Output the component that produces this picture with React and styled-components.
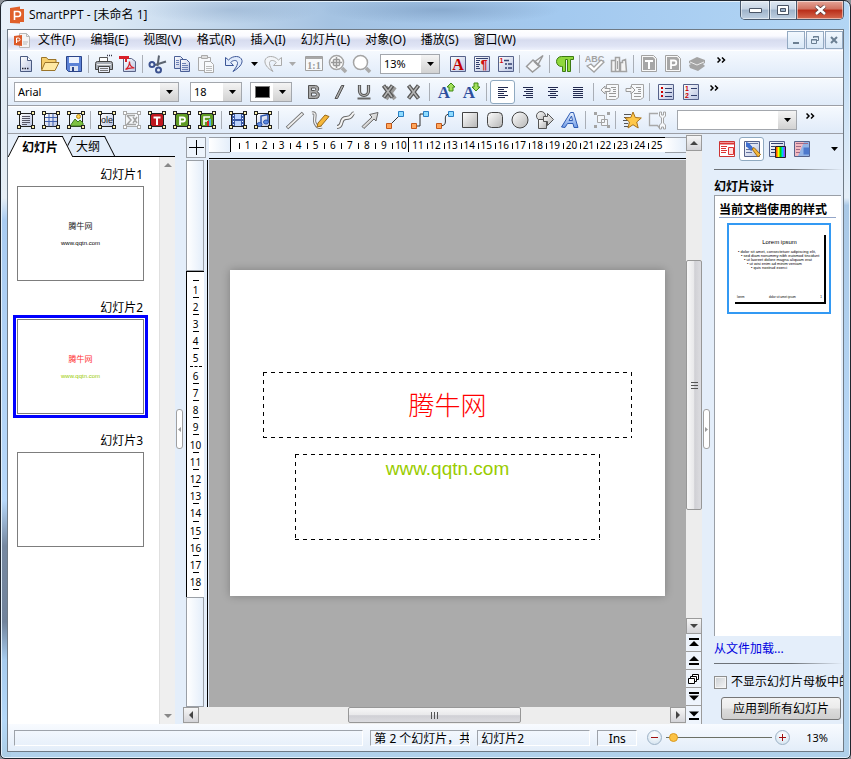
import React from 'react';
import styled, { createGlobalStyle, css } from 'styled-components';

const Global = createGlobalStyle`
  * { box-sizing: border-box; }
  body { margin: 0; background: #8d9299; }
  body, button, input, select {
    font-family: "Noto Sans", "Noto Sans CJK SC", sans-serif;
    font-size: 12px;
    line-height: 16px;
    color: #000;
  }
  button { border: 0; padding: 0; background: none; }
  svg { display: block; flex: none; }
`;

/* ---------- window shell ---------- */

const Shell = styled.div`
  display: flex;
  flex-direction: column;
  min-height: 100vh;
  padding: 0 6px 6px;
  border: 1px solid #20262f;
  border-radius: 7px 7px 5px 5px;
  box-shadow: inset 0 0 0 1px #e3f0fb;
  background:
    radial-gradient(ellipse 120px 14px at 440px 9px, rgba(98, 130, 170, 0.4), transparent),
    radial-gradient(ellipse 90px 14px at 230px 9px, rgba(98, 130, 170, 0.25), transparent),
    linear-gradient(90deg, #e9f1fa 0, #dbe8f5 110px, #a5c3e2 330px, #a3c9ef 560px, #b3d6f5 100%) 0 0 / 100% 29px no-repeat,
    linear-gradient(180deg, #dce6f0 0, #e6eef5 26%, #a9ccf2 29%, #b7d8fa 66%, #7688a0 72%, #71839b 82%, #a6cbee 87%, #b4d8f8 95%, #abcde4 100%) 0 0 / 10px 100% no-repeat,
    linear-gradient(180deg, #b3d6f5 0, #e4eef8 26%, #a9c8e6 27%, #b7d8f8 60%, #b0d0ea 100%);
`;

const TitleBar = styled.header`
  display: flex;
  height: 28px;
  padding-left: 2px;
`;

const TitleText = styled.h1`
  flex: 1;
  margin: 0;
  padding: 5px 0 0 4px;
  font: 400 12px/18px "Open Sans", "Noto Sans CJK SC", sans-serif;
`;

const CaptionButtons = styled.div`
  display: flex;
  height: 19px;
  border: 1px solid #4a5a6e;
  border-top: 0;
  border-radius: 0 0 5px 5px;
  overflow: hidden;
`;

const CaptionButton = styled.button`
  display: grid;
  place-items: center;
  width: ${(p) => p.$width}px;
  background: ${(p) =>
    p.$danger
      ? 'linear-gradient(#e5a699, #d0705f 45%, #b92c18 50%, #d5694f)'
      : 'linear-gradient(#dfe8f2, #c5d3e3 45%, #9fb3ca 50%, #bfd0e2)'};
  box-shadow: inset 0 0 0 1px rgba(255, 255, 255, 0.5);
  & + & { border-left: 1px solid #4a5a6e; }
`;

const Client = styled.div`
  flex: 1;
  display: flex;
  flex-direction: column;
  min-width: 0;
  border: 1px solid #6f7a85;
  background: #e4eefa;
`;

const MenuBar = styled.nav`
  display: flex;
  align-items: center;
  gap: 1px;
  height: 20px;
  padding-left: 6px;
  background: linear-gradient(#ffffff 0, #fafaff 30%, #d7dcef 50%, #dfe4f5 80%, #eef2fc);
`;

const MenuItem = styled.button`
  padding: 0 7px;
  white-space: nowrap;
  &:first-of-type { padding-left: 6px; }
`;

const MdiButtons = styled.div`
  display: flex;
  gap: 1px;
  margin-left: auto;
`;

const MdiButton = styled.button`
  display: grid;
  place-items: center;
  width: 18px;
  height: 18px;
  border: 1px solid #93a9c1;
  background: linear-gradient(#f2f8fe, #d9e8f7);
`;

/* ---------- toolbars ---------- */

const Toolbar = styled.div`
  display: flex;
  align-items: center;
  height: 28px;
  padding-left: ${(p) => p.$start}px;
  border-bottom: 1px solid #9c9fa6;
  border-top: 1px solid #ffffff;
  background: linear-gradient(#f5f9fe, #e0ebf9);
`;

const ToolButton = styled.button`
  display: grid;
  place-items: center;
  flex: none;
  width: ${(p) => p.$width || 25}px;
  height: 24px;
  ${(p) =>
    p.$active &&
    css`
      border: 1px solid #8fa9c0;
      border-radius: 3px;
      background: #fff;
    `}
`;

const Separator = styled.span`
  flex: none;
  width: 1px;
  height: 18px;
  margin: 0 3px 0 ${(p) => p.$lead ?? 3}px;
  background: #a9aeb6;
`;

const Overflow = styled.button`
  align-self: flex-start;
  margin-left: ${(p) => p.$lead}px;
  height: 18px;
`;

const DropButton = styled.button`
  margin: 0 ${(p) => p.$trail}px 0 ${(p) => p.$lead}px;
`;

const ComboBox = styled.label`
  display: flex;
  flex: none;
  width: ${(p) => p.$width}px;
  height: 20px;
  margin: 0 ${(p) => p.$after || 0}px 0 ${(p) => p.$before || 0}px;
  border: 1px solid #a3a7ad;
  background: #fff;
`;

const ComboSelect = styled.select`
  flex: 1;
  min-width: 0;
  appearance: none;
  border: 0;
  padding: 0 3px;
  background: #fff;
  font-size: 11px;
`;

const ComboArrow = styled.span`
  display: grid;
  place-items: center;
  width: 18px;
  background: linear-gradient(#f4f4f4, #d2d2d2);
  pointer-events: none;
`;

const ColorPicker = styled.button`
  display: flex;
  width: 42px;
  height: 20px;
  margin: 0 9px 0 8px;
  border: 1px solid #a3a7ad;
  background: #fff;
`;

const ColorSwatch = styled.span`
  flex: 1;
  height: 12px;
  margin: 3px 3px 3px 4px;
  background: #000;
  border: 1px solid #777;
`;

/* ---------- work area ---------- */

const Workspace = styled.main`
  flex: 1;
  display: flex;
  min-height: 0;
`;

const SlidePanel = styled.aside`
  display: flex;
  flex-direction: column;
  width: 167px;
`;

const Tabs = styled.div`
  display: flex;
  height: 23px;
  padding: 2px 0 0 5px;
  border-bottom: 1px solid #000;
`;

const Tab = styled.button`
  position: relative;
  z-index: ${(p) => (p.$active ? 1 : 0)};
  height: ${(p) => (p.$active ? 21 : 20)}px;
  width: ${(p) => (p.$active ? 54 : 42)}px;
  font-weight: ${(p) => (p.$active ? 700 : 400)};
  padding-top: 2px;
  &::before,
  &::after {
    content: '';
    position: absolute;
    z-index: -1;
    top: 0;
    bottom: 0;
    background: ${(p) => (p.$active ? '#fff' : '#e4eefa')};
    border-top: 1px solid #000;
  }
  &::before {
    left: 0;
    right: 25%;
    border-left: 1px solid #000;
    transform: skewX(-27deg);
  }
  &::after {
    left: 25%;
    right: 0;
    border-right: 1px solid #000;
    transform: skewX(27deg);
  }
`;

const PanelBody = styled.div`
  flex: 1;
  display: flex;
  background: #fff;
`;

const Thumbs = styled.ol`
  flex: 1;
  display: flex;
  flex-direction: column;
  gap: 13px;
  margin: 0;
  padding: 8px 11px 8px 5px;
  list-style: none;
`;

const ThumbItem = styled.li`
  display: flex;
  flex-direction: column;
`;

const ThumbLabel = styled.span`
  height: 17px;
  padding-right: 5px;
  text-align: right;
  line-height: 19px;
`;

const ThumbFrame = styled.button`
  padding: 1px;
  border: 3px solid ${(p) => (p.$selected ? '#0000ff' : 'transparent')};
`;

const ThumbPage = styled.span`
  display: flex;
  flex-direction: column;
  align-items: center;
  gap: 8px;
  height: 95px;
  padding-top: 34px;
  border: 1px solid #7d7d7d;
  background: #fff;
  color: ${(p) => (p.$selected ? '#f33' : '#222')};
  font-size: 8px;
  line-height: 10px;
`;

const ThumbUrl = styled.span`
  color: ${(p) => (p.$selected ? '#99cc00' : '#000')};
  font-family: "Liberation Sans", sans-serif;
  font-size: 6px;
  line-height: 8px;
`;

const ListScroll = styled.div`
  display: flex;
  flex-direction: column;
  justify-content: space-between;
  width: 16px;
  background: #efefef;
  border-left: 1px solid #e0e0e0;
  button { display: grid; place-items: center; height: 16px; }
`;

const Splitter = styled.div`
  display: flex;
  align-items: center;
  justify-content: center;
  width: ${(p) => p.$width}px;
`;

const SplitGrip = styled.button`
  display: grid;
  place-items: center;
  width: 7px;
  height: 40px;
  border: 1px solid #a0a0a0;
  border-radius: 3px;
  background: #fff;
`;

const Editor = styled.section`
  flex: 1;
  min-width: 0;
  display: grid;
  grid-template-columns: 26px minmax(0, 1fr) 16px;
  grid-template-rows: 26px minmax(0, 1fr) 17px;
`;

const RulerCorner = styled.div`
  margin: 3px 3px 2px;
  border: 1px solid #9a9fa6;
  background:
    linear-gradient(#000, #000) center / 15px 1px no-repeat,
    linear-gradient(#000, #000) center / 1px 15px no-repeat,
    #edf4fc;
`;

const TopRuler = styled.div`
  display: flex;
  align-items: flex-start;
  margin-bottom: 1px;
  padding-top: 3px;
  border-bottom: 1px solid #000;
`;

const TopRulerEnd = styled.span`
  flex: 1;
  height: 16px;
  border: 1px solid #9a9fa6;
  border-width: 1px 0;
  background: linear-gradient(90deg, #fff, #e4eefa);
`;

const TopScale = styled.ol`
  display: flex;
  width: 435px;
  height: 15px;
  margin: 0;
  padding: 0 0 0 8px;
  list-style: none;
  border-top: 1px solid #000;
  border-left: 1px solid #000;
  background: #fff;
  font-size: 10px;
  line-height: 14px;
  li { flex: 1; display: flex; align-items: center; justify-content: center; position: relative; }
  li::before {
    content: '';
    position: absolute;
    left: 0;
    top: 5px;
    height: 6px;
    border-left: 1px solid #000;
  }
  li:nth-child(11)::before { top: 0; height: 14px; left: -1px; }
`;

const SideRuler = styled.div`
  display: flex;
  flex-direction: column;
  margin-right: 1px;
  padding: 0 3px 0 3px;
  border-right: 1px solid #000;
`;

const SideRulerEnd = styled.span`
  flex: 1;
  border: 1px solid #9a9fa6;
  background: linear-gradient(90deg, #fff, #e4eefa);
`;

const SideScale = styled.ol`
  display: flex;
  flex-direction: column;
  height: 326px;
  margin: 0;
  padding: 8px 0 7px;
  list-style: none;
  border-top: 1px solid #000;
  border-left: 1px solid #000;
  background: #fff;
  font-size: 10px;
  line-height: 12px;
  li { flex: 1; display: flex; align-items: center; justify-content: center; position: relative; padding-top: 3px; }
  li::before, li:last-child::after {
    content: '';
    position: absolute;
    top: 0;
    width: 6px;
    border-top: 1px solid #000;
  }
  li:last-child::after { top: 100%; }
  li:nth-child(6)::before { width: 12px; border-top-style: dashed; }
`;

const Canvas = styled.div`
  display: flex;
  align-items: center;
  justify-content: center;
  padding-bottom: 2px;
  background: #ababab;
`;

const Slide = styled.article`
  display: flex;
  flex-direction: column;
  align-items: center;
  gap: 16px;
  width: 435px;
  height: 326px;
  padding-top: 102px;
  background: #fff;
  box-shadow: 0 0 8px rgba(0, 0, 0, 0.25);
`;

const dashX = 'repeating-linear-gradient(90deg, #000 0 4px, transparent 4px 8px)';
const dashY = 'repeating-linear-gradient(180deg, #000 0 4px, transparent 4px 8px)';

const Placeholder = styled.div`
  width: ${(p) => p.$width}px;
  height: ${(p) => p.$height}px;
  text-align: center;
  background:
    ${dashX} 0 0 / 100% 1px no-repeat,
    ${dashX} 0 100% / 100% 1px no-repeat,
    ${dashY} 0 0 / 1px 100% no-repeat,
    ${dashY} 100% 0 / 1px 100% no-repeat;
`;

const SlideTitle = styled.h2`
  margin: 0;
  color: #ff0000;
  font: 300 26px/64px "Noto Sans CJK SC", sans-serif;
`;

const SlideSubtitle = styled.p`
  margin: 0;
  padding-top: 3px;
  color: #99cc00;
  font: 19px/24px "Liberation Sans", sans-serif;
`;

const ScrollButton = styled.button`
  display: grid;
  place-items: center;
  flex: none;
  width: 16px;
  height: 16px;
  border: 1px solid #9b9b9b;
  background: linear-gradient(#f6f6f6, #d4d4d8);
`;

const VScroll = styled.div`
  grid-column: 3;
  grid-row: 1 / 4;
  display: flex;
  flex-direction: column;
  padding-top: 1px;
  background: #ededed;
`;

const HScroll = styled.div`
  grid-column: 1 / 3;
  grid-row: 3;
  display: flex;
  background: #ededed;
`;

const ScrollGap = styled.span`
  flex: ${(p) => p.$share} 1 0;
`;

const ScrollThumb = styled.button`
  display: grid;
  place-items: center;
  flex: ${(p) => p.$share} 1 0;
  border: 1px solid #979797;
  border-radius: 2px;
  background: linear-gradient(${(p) => (p.$vertical ? '90deg' : '180deg')}, #f7f7f7, #e9e9eb 48%, #d0d0d5 55%, #dcdce0);
  ${(p) => !p.$vertical && 'height: 16px;'}
`;

const NavButton = styled.button`
  display: grid;
  place-items: center;
  flex: none;
  height: 18px;
  background: #eef4fc;
  border-bottom: 1px solid #9b9b9b;
  border-right: 1px solid #9b9b9b;
  &:last-child { border-bottom: 0; }
`;

/* ---------- task pane ---------- */

const TaskPane = styled.aside`
  display: flex;
  flex-direction: column;
  width: 132px;
  padding-left: 3px;
  overflow: hidden;
`;

const PaneTools = styled.div`
  display: flex;
  align-items: center;
  height: 30px;
`;

const PaneMore = styled.button`
  margin: 0 4px 0 auto;
`;

const Rule = styled.hr`
  width: 100%;
  height: 1px;
  margin: ${(p) => p.$top}px 0 0;
  border: 0;
  background: linear-gradient(90deg, #6d7278 60%, transparent);
`;

const PaneTitle = styled.h2`
  margin: 7px 0 0;
  font: 700 12px/18px "Noto Sans CJK SC", sans-serif;
`;

const StyleList = styled.div`
  flex: 1;
  margin-right: 2px;
  padding: 5px 5px 0 4px;
  border-top: 1px solid #9a9fa6;
  border-left: 1px solid #9a9fa6;
  background: #fff;
`;

const StyleHeading = styled.h3`
  margin: 0 0 5px;
  border-bottom: 1px solid #93a5c8;
  font: 700 12px/16px "Noto Sans CJK SC", sans-serif;
  white-space: nowrap;
`;

const StyleCard = styled.button`
  display: block;
  width: 104px;
  height: 91px;
  margin-left: 8px;
  padding: 10px 3px 8px 6px;
  border: 2px solid #3399f3;
  text-align: left;
`;

const StylePage = styled.span`
  display: flex;
  flex-direction: column;
  height: 69px;
  padding: 3px 2px;
  border-right: 2px solid #000;
  border-bottom: 2px solid #000;
  font-family: "Liberation Sans", sans-serif;
  font-size: 4px;
  line-height: 4px;
  white-space: nowrap;
`;

const StyleName = styled.span`
  margin-bottom: 4px;
  text-align: center;
  font-size: 6px;
  line-height: 8px;
`;

const StyleLine = styled.span`
  padding-left: ${(p) => p.$indent}px;
`;

const StyleFooter = styled.span`
  display: flex;
  justify-content: space-between;
  margin-top: auto;
  font-size: 3px;
`;

const LoadLink = styled.a`
  margin-top: 5px;
  color: #0000e0;
  text-decoration: none;
`;

const MasterOption = styled.label`
  display: flex;
  align-items: center;
  gap: 4px;
  margin-top: 10px;
  white-space: nowrap;
`;

const CheckBox = styled.input`
  appearance: none;
  flex: none;
  width: 13px;
  height: 13px;
  margin: 0;
  border: 1px solid #8e8f8f;
  background: linear-gradient(135deg, #c9ced3, #f6f6f6);
  box-shadow: inset 0 0 0 1px #f4f4f4;
`;

const ApplyButton = styled.button`
  height: 23px;
  margin: 7px 2px 4px 7px;
  border: 1px solid #767676;
  border-radius: 3px;
  background: linear-gradient(#f4f4f4, #ebebeb 48%, #dcdcdc 52%, #cfcfcf);
  white-space: nowrap;
`;

/* ---------- status bar ---------- */

const StatusBar = styled.footer`
  display: flex;
  align-items: center;
  height: 27px;
  padding: 0 15px 0 6px;
  background: linear-gradient(#f8fbff, #e3edf9);
`;

const StatusCell = styled.span`
  flex: ${(p) => (p.$width ? `0 0 ${p.$width}px` : '1 1 0')};
  height: 16px;
  margin-right: 7px;
  padding-left: ${(p) => (p.$center ? 0 : 3)}px;
  border: 1px solid #9ea3aa;
  border-right-color: #fff;
  border-bottom-color: #fff;
  text-align: ${(p) => (p.$center ? 'center' : 'left')};
  line-height: 15px;
  white-space: nowrap;
  overflow: hidden;
`;

const ZoomControl = styled.div`
  display: flex;
  align-items: center;
  margin: 0 16px 0 3px;
`;

const ZoomButton = styled.button`
  display: grid;
  place-items: center;
  flex: none;
  width: 15px;
  height: 15px;
  border: 1px solid #9db2c6;
  border-radius: 50%;
  background: radial-gradient(circle at 50% 30%, #fff, #cfe0ee);
`;

const ZoomSlider = styled.input`
  appearance: none;
  width: 111px;
  height: 15px;
  margin: 0 1px;
  background: linear-gradient(#6c7065, #6c7065) center / 106px 1px no-repeat;
  &::-webkit-slider-thumb {
    appearance: none;
    width: 9px;
    height: 9px;
    border: 1px solid #d99a22;
    border-radius: 50%;
    background: #fcc244;
  }
`;

const ZoomValue = styled.span`
  font-size: 11px;
`;

/* ---------- icons ---------- */

const Svg = ({ w = 20, h = w, children }) => (
  <svg width={w} height={h} viewBox={`0 0 ${w} ${h}`} fill="none" aria-hidden="true">
    {children}
  </svg>
);

const HiddenSvg = styled.svg`
  position: absolute;
  width: 0;
  height: 0;
`;

const Down = ({ color = '#000' }) => (
  <Svg w={9} h={5}><path d="M1 0h7L4.500 4z" fill={color} /></Svg>
);

const Chevrons = () => (
  <Svg w={9} h={6}>
    <path d="M.5.5L3 3 .5 5.500M5 .5L7.500 3 5 5.500" stroke="#000" strokeWidth="1.500" />
  </Svg>
);

const Defs = () => (
  <HiddenSvg aria-hidden="true">
    <defs>
      <linearGradient id="page" x2="1" y2="1"><stop stopColor="#fff" /><stop offset="1" stopColor="#b9c4e2" /></linearGradient>
      <linearGradient id="metal" x2="1" y2="1"><stop stopColor="#fff" /><stop offset="1" stopColor="#b5b5b5" /></linearGradient>
      <linearGradient id="sky" x2="0" y2="1"><stop stopColor="#eaf3ff" /><stop offset="1" stopColor="#6f9be6" /></linearGradient>
      <linearGradient id="rainbow">
        <stop stopColor="#f00" /><stop offset=".3" stopColor="#ff0" /><stop offset=".5" stopColor="#0d0" /><stop offset=".7" stopColor="#0cf" /><stop offset="1" stopColor="#d0f" />
      </linearGradient>
    </defs>
  </HiddenSvg>
);

const handle = (x, y, dark) => (
  <rect key={`${x}-${y}`} x={x} y={y} width="3" height="3" fill={dark ? '#fff3b0' : '#fff'} stroke={dark ? '#222' : '#aaa'} />
);

const Framed = ({ children, muted, fill = 'url(#page)' }) => (
  <Svg>
    <path d="M3.500 3.500h13v13h-13z" fill={fill} stroke={muted ? '#aaa' : '#222'} />
    {children}
    {[[1.5, 1.5], [15.5, 1.5], [1.5, 15.5], [15.5, 15.5]].map(([x, y]) => handle(x, y, !muted))}
  </Svg>
);

const GlyphText = ({ x = 10, y, size, fill, children, serif, stroke, weight = 700 }) => (
  <text x={x} y={y} fontSize={size} fontWeight={weight} textAnchor="middle" fill={fill} stroke={stroke}
    fontFamily={serif ? 'Liberation Serif, serif' : 'Liberation Sans, sans-serif'}>{children}</text>
);

const BoxFrame = ({ children, stroke = '#56628a', fill = 'url(#page)' }) => (
  <Svg><path d="M2.500 2.500h15v15h-15z" fill={fill} stroke={stroke} />{children}</Svg>
);

const Lines = ({ rows, color = '#33406e' }) => (
  <path d={rows.map(([x, y, l]) => `M${x} ${y}.500h${l}`).join('')} stroke={color} />
);

const AppLogo = () => (
  <Svg w={16} h={28}>
    <path d="M1 7L11 5.500V8h4v13h-4v1.500L1 22z" fill="#e0602a" />
    <path d="M5.500 19v-8.500H9a2.500 2.500 0 0 1 0 5H5.500" stroke="#fff" strokeWidth="1.600" />
  </Svg>
);

const DocLogo = () => (
  <Svg w={17} h={17}>
    <path d="M5.500 1.500h7l3 3v11h-10z" fill="#f4f4f4" stroke="#b9b9b9" />
    <path d="M12.500 1.500v3h3M9 12h4M9 10h5" stroke="#b9b9b9" />
    <path d="M0 4l8-1v11l-8-1z" fill="#dc5a28" />
    <path d="M2.500 11V6h2a1.500 1.500 0 0 1 0 3h-2" stroke="#fff" />
  </Svg>
);

const zoomGlass = <><circle cx="8.500" cy="8.500" r="7" fill="#fff" stroke="#a4a4a4" strokeWidth="1.500" /><path d="M14 14l4 4" stroke="#aaa" strokeWidth="3.500" /></>;

const connector = (path) => (
  <Svg>
    <path d={path} stroke="#333" />
    <path d="M13.500 1.500h5v5h-5z" fill="#8fdcff" stroke="#2a7fc4" />
    <path d="M1.500 13.500h5v5h-5z" fill="#ffa65c" stroke="#c4581a" />
  </Svg>
);

const alignLines = (xs) => (
  <Svg>
    <path d={xs.map(([x, l], i) => `M${x} ${5.5 + i * 2}h${l}`).join('')} stroke="#222a50" />
  </Svg>
);

const leftRows = [[5, 10], [5, 6], [5, 9], [5, 6], [5, 10], [5, 7]];

const icons = {
  new: <Svg><path d="M4.500 2.500h7l4 4v11h-11z" fill="url(#page)" stroke="#4a5a80" /><path d="M11.500 2.500v4h4" fill="#fff" stroke="#4a5a80" /><path d="M6 14.500h1.500m1 0H10m1 0h1.500" stroke="#223" strokeWidth="1.500" /></Svg>,
  open: <Svg><path d="M1.500 15.500v-12h5l1.500 2h8v3" fill="#f6cf6e" stroke="#9a742a" /><path d="M1.500 16.500l3.500-8h14l-4 8z" fill="#ffe9a4" stroke="#9a742a" /></Svg>,
  save: <Svg><path d="M2.500 2.500h15v15h-13l-2-2z" fill="#5c82d6" stroke="#2b4488" /><path d="M5 3h10v6H5z" fill="#eef3fd" /><path d="M6 12h8v5H6z" fill="#dde4f2" /><path d="M8 13h2v4H8z" fill="#2b4488" /></Svg>,
  print: <Svg><path d="M13 1.500h1m1 0h1m1 0h1" stroke="#334" strokeWidth="1.500" /><path d="M5.500 9V3.500h8V9" fill="#fff" stroke="#555" /><path d="M1.500 9.500q0-2 2-2h13q2 0 2 2v6h-17z" fill="#a8adb5" stroke="#444" /><path d="M3 10.500h14" stroke="#efefef" /><path d="M4.500 12.500h11v6h-11z" fill="#e8ecf8" stroke="#444" /><path d="M6 14.500h8m-8 2h8" stroke="#777" /></Svg>,
  pdf: <Svg><path d="M5.500 4.500h8l4 3v10h-12z" fill="url(#page)" stroke="#5a6488" /><path d="M1 2h10v3H9v3H7V5H1z" fill="#d8202a" /><path d="M7.500 15.500c3-2 4-4 4-8 0 4 2 6 5 6.500-4-.5-6 0-9 1.500z" stroke="#d8202a" strokeWidth="1.200" /></Svg>,
  cut: <Svg><path d="M11 1.500L9.500 12M18 7.500L7 11" stroke="#5c6470" strokeWidth="2" /><circle cx="4" cy="10.500" r="2.500" stroke="#3c5290" strokeWidth="2" /><circle cx="10.500" cy="16" r="2.500" stroke="#3c5290" strokeWidth="2" /></Svg>,
  copy: <Svg>{['M2.500 2.500h6l3 3v9h-9z', 'M8.500 5.500h6l3 3v9h-9z'].map((d) => <path key={d} d={d} fill="url(#page)" stroke="#4a5f96" />)}<path d="M10 9.500h4m-4 2h6m-6 2h6m-6 2h6M4 6.500h3m-3 2h3m-3 2h3" stroke="#6c80b4" /></Svg>,
  paste: <Svg><path d="M2.500 3.500h12v13h-12z" fill="#f6f8fb" stroke="#aaa" /><path d="M5.500 1.500h6v3h-6z" fill="#ddd" stroke="#aaa" /><path d="M8.500 7.500h6l3 3v8h-9z" fill="#f8fafc" stroke="#aaa" /><path d="M10 12.500h6m-6 2h6m-6 2h6" stroke="#bbb" /></Svg>,
  undo: <Svg><path d="M1.500 3.500v8h8L6.700 8.500C10 5 14 6.500 13.500 9.500c-.3 2.500-2 4.500-4.500 8 6-3.500 9.500-7.500 9-11C17 1.500 9 1 4.500 6z" fill="#dfeafc" stroke="#3c5696" /></Svg>,
  redo: <Svg><path d="M18.500 3.500v8h-8l2.800-3C10 5 6 6.500 6.500 9.500c.3 2.500 1 4.500 3.500 8-6-3.500-8.500-7.500-8-11C3 1.500 11 1 15.500 6z" fill="#f2f5f9" stroke="#aaa" /></Svg>,
  actual: <Svg><path d="M1.500 2.500h17v14h-17z" fill="#f7f9fb" stroke="#a0a0a0" /><path d="M2 4h16" stroke="#a8a8a8" strokeWidth="2" /><GlyphText y={14.5} size={10} serif fill="#999">1:1</GlyphText></Svg>,
  globe: <Svg>{zoomGlass}<path d="M8.500 3v11M3 8.500h11M5.500 5.500v6m6-6v6M5.500 5.500h6m-6 6h6" stroke="#999" strokeWidth="1.500" /></Svg>,
  glass: <Svg>{zoomGlass}</Svg>,
  charA: <BoxFrame><GlyphText y={16} size={16} serif fill="#c00000">A</GlyphText></BoxFrame>,
  para: <BoxFrame><Lines rows={[[4, 4, 12], [4, 6, 4], [4, 8, 3], [4, 10, 4], [4, 12, 3], [4, 14, 4]]} /><GlyphText x={12} y={15} size={12} fill="#d01010">¶</GlyphText></BoxFrame>,
  number: <BoxFrame><GlyphText x={5.500} y={9} size={7} fill="#d01010">1</GlyphText><path d="M8 6.500h5M9 10h2M9 14h2M12 10h4M12 14h4" stroke="#33406e" strokeWidth="1.500" /></BoxFrame>,
  brush: <Svg><path d="M18 1.500L10 7.500l3 3zM8 6l-6.500 6.500 6 5.500L15 12z" fill="#f4f6f9" stroke="#999" strokeWidth="1.400" /><path d="M9 7l5 5" stroke="#999" strokeWidth="2" /></Svg>,
  pilcrow: <Svg><path d="M18.500 2.500H6.500a5 5 0 0 0 0 10h1v5h3v-12h2v12h3v-12h3z" fill="#8fd83c" stroke="#3c7a12" /></Svg>,
  abc: <Svg><GlyphText x={9.500} y={8} size={9} fill="#a2a2a2">ABC</GlyphText><path d="M2 12l4-2 3 3 7-7 3 2-10 10z" fill="#fff" stroke="#a2a2a2" strokeWidth="1.300" /></Svg>,
  books: <Svg><path d="M2.500 6.500h4v11h-4zM6.500 3.500h4v14h-4zM11.500 8.500h2v-2l3-1 1 12h-6z" fill="#f4f4f4" stroke="#a2a2a2" strokeWidth="1.500" /><path d="M8.500 7v8" stroke="#a2a2a2" /></Svg>,
  boxT: <Svg><path d="M2.500 1.500h12l3 3v13h-15z" fill="#f8f8f8" stroke="#a2a2a2" /><path d="M4 3h10l2 2v11H4z" fill="#a6a6a6" /><path d="M6 7h8M10 7v8" stroke="#fff" strokeWidth="2" /></Svg>,
  boxP: <Svg><path d="M2.500 1.500h12l3 3v13h-15z" fill="#f8f8f8" stroke="#a2a2a2" /><path d="M4 3h10l2 2v11H4z" fill="#a6a6a6" /><path d="M8 15V6.500h3a2.300 2.300 0 0 1 0 4.600H8" stroke="#fff" strokeWidth="1.800" /></Svg>,
  gallery: <Svg><path d="M2 7l8-4 8 3v3l-2 1 2 2-7 5-8-3-1-3 2-1-2-1z" fill="#a4a4a4" /><path d="M3 8l7 3 7-3" stroke="#eee" /></Svg>,
  bold: <Svg><path d="M4.500 3.500h7a3.300 3.300 0 0 1 1.500 6.200 3.500 3.500 0 0 1-1.500 6.800h-7zM7.500 6v2.500h3a1.200 1.200 0 0 0 0-2.500zM7.500 11v3h3.500a1.500 1.500 0 0 0 0-3z" fill="#aaa" stroke="#555" fillRule="evenodd" /></Svg>,
  italic: <Svg><path d="M12.500 3.500h2.500L8.500 16.500H6z" fill="#aaa" stroke="#555" /></Svg>,
  underline: <Svg><path d="M5.500 3v6a4.500 4.500 0 0 0 9 0V3" stroke="#555" strokeWidth="3.200" /><path d="M5.500 3.500V9a4.500 4.500 0 0 0 9 0V3.500" stroke="#bbb" strokeWidth="1.200" /><path d="M3.500 16.500h13" stroke="#666" strokeWidth="2" /></Svg>,
  shadowX: <Svg><path d="M7 5l9 12M16 5L7 17" stroke="#999" strokeWidth="4" /><path d="M4.500 3.500l9 12m0-12l-9 12" stroke="#555" strokeWidth="4" /><path d="M5 4l8 11m0-11L5 15" stroke="#b5b5b5" strokeWidth="1.500" /></Svg>,
  outlineX: <Svg><path d="M4.500 3.500l10 13m0-13l-10 13" stroke="#555" strokeWidth="4" /><path d="M5 4l9 12m0-12L5 16" stroke="#b5b5b5" strokeWidth="1.500" /></Svg>,
  grow: <Svg><GlyphText x={8} y={16} size={17} serif fill="#2e4f9e">A</GlyphText><path d="M15 1l4 4h-2v4h-4V5h-2z" fill="#a5e05c" stroke="#3c8a12" /></Svg>,
  shrink: <Svg><GlyphText x={8} y={16} size={17} serif fill="#2e4f9e">A</GlyphText><path d="M15 9l4-4h-2V1h-4v4h-2z" fill="#a5e05c" stroke="#3c8a12" /></Svg>,
  left: alignLines(leftRows),
  center: alignLines([[5, 10], [8, 7], [6, 9], [8, 7], [5, 10], [8, 7]]),
  right: alignLines([[5, 10], [7, 6], [5, 10], [7, 6], [5, 10], [7, 6]]),
  justify: alignLines([[5, 10], [5, 10], [5, 10], [5, 10], [5, 10], [5, 10]]),
  outdent: <Svg><path d="M6.500 2.500h12v13l-3 2h-9z" fill="#f7f9fb" stroke="#a4a4a4" /><path d="M11 5.500h5m-3 2h3m-3 2h3m-7 2h7m-7 3h7" stroke="#999" /><path d="M1 8l4-4v2.500h5v3H5V12z" fill="#f7f7f7" stroke="#999" /></Svg>,
  indent: <Svg><path d="M6.500 2.500h12v13l-3 2h-9z" fill="#f7f9fb" stroke="#a4a4a4" /><path d="M11 5.500h5m-3 2h3m-3 2h3m-7 2h7m-7 3h7" stroke="#999" /><path d="M10 8L6 4v2.500H1v3h5V12z" fill="#f7f7f7" stroke="#999" /></Svg>,
  bullets: <BoxFrame><path d="M5 5h2v2H5zm0 4h2v2H5zm0 4h2v2H5z" fill="#c00" /><path d="M9 6.500h7m-7 4h7m-7 4h7" stroke="#33406e" /></BoxFrame>,
  numbers: <BoxFrame><GlyphText x={6} y={9} size={7} fill="#c00">1</GlyphText><GlyphText x={6} y={16} size={7} fill="#c00">2</GlyphText><path d="M10 6.500h6m-6 7h6" stroke="#33406e" /></BoxFrame>,
  fText: <Framed><Lines rows={[[6, 6, 8], [6, 8, 8], [6, 10, 8], [6, 12, 8], [6, 14, 5]]} color="#556" /></Framed>,
  fTable: <Framed><path d="M4 7.500h12m-12 4h12m-8-8v13m4-13v13" stroke="#3f5fae" /></Framed>,
  fImage: <Framed fill="#eef7ff"><path d="M4 16l5-7 3 3 2-2 3 3v3z" fill="#7cc142" stroke="#3c7a22" /><circle cx="12.500" cy="6.500" r="2" fill="#ffd34a" stroke="#b98a1c" /></Framed>,
  fOle: <Framed><GlyphText y={13} size={9} weight={400} fill="#112">ole</GlyphText></Framed>,
  fSum: <Framed muted fill="#f6f8fb"><path d="M5 5.500h8M5 5.500l4 4.500-4 4.500h9M11 7l4 6M15 7l-4 6" stroke="#a4a4a4" strokeWidth="1.500" /></Framed>,
  fT: <Framed fill="#fff"><path d="M4 4h12v12H4z" fill="#c01820" /><path d="M6.500 7.500h7M10 7.500V15" stroke="#fff" strokeWidth="2" /></Framed>,
  fP: <Framed fill="#fff"><path d="M4 4h12v12H4z" fill="#5f9a24" /><path d="M8 15V7.500h3a2 2 0 0 1 0 4H8" stroke="#fff" strokeWidth="1.800" /></Framed>,
  fChart: <Framed fill="#fff"><path d="M4 4h12v12H4z" fill="#5f9a24" /><path d="M7 15V7h6M7 11h4" stroke="#fff" strokeWidth="1.600" /><path d="M10 11h2v5h-2z" fill="#e02020" /><path d="M12 9h2v7h-2z" fill="#4ab8e8" /></Framed>,
  fFilm: <Framed fill="#3c5ba6"><path d="M7 4h6v5H7zM7 11h6v5H7z" fill="#bcd4ff" /><path d="M5.500 5v11m9-11v11" stroke="#fff" strokeDasharray="1 2" /></Framed>,
  fMusic: <Framed><path d="M8 14.500V6l7-1.500V12" stroke="#2c55ae" strokeWidth="1.500" /><ellipse cx="6.500" cy="14.500" rx="2.500" ry="2" fill="#5c8ae0" stroke="#2c55ae" /><ellipse cx="13" cy="12" rx="2.500" ry="2" fill="#5c8ae0" stroke="#2c55ae" /></Framed>,
  line: <Svg><path d="M2 18L18 3" stroke="#666" strokeWidth="3.500" /><path d="M2.500 17.500l15-14" stroke="#eee" strokeWidth="1.800" /></Svg>,
  pencil: <Svg><path d="M2 3c6-1 1 6 3 10s3 5 7 4" stroke="#777" strokeWidth="3.200" /><path d="M2 3c6-1 1 6 3 10s3 5 7 4" stroke="#f2f2f2" strokeWidth="1.400" /><path d="M7 17l1-4 7-8 4 1.500L11 16z" fill="#f5b73a" stroke="#9a6a18" /></Svg>,
  curve: <Svg><path d="M2 17C9 17 4 8 11 8s5-4 8-5" stroke="#666" strokeWidth="3.800" /><path d="M2 17C9 17 4 8 11 8s5-4 8-5" stroke="#f4f4f4" strokeWidth="2" /></Svg>,
  arrow: <Svg><path d="M2 16.500L12 7 9.500 4.500l8.500-2-2 8.500L14 9 4 18.500z" fill="url(#metal)" stroke="#666" /></Svg>,
  con1: connector('M5 15L15 5'),
  con2: connector('M6 16h4V4h4'),
  con3: connector('M6 16c9-1 0-11 8-12'),
  rect: <Svg><path d="M2.500 2.500h15v15h-15z" fill="url(#metal)" stroke="#444" /></Svg>,
  round: <Svg><rect x="2.500" y="2.500" width="15" height="15" rx="4" fill="url(#metal)" stroke="#444" /></Svg>,
  circle: <Svg><circle cx="10" cy="10" r="8" fill="url(#metal)" stroke="#444" /></Svg>,
  shapes: <Svg><circle cx="6" cy="6" r="4.500" fill="url(#metal)" stroke="#555" /><path d="M3.500 9.500h8v9h-8z" fill="url(#metal)" stroke="#555" /><path d="M8.500 6.500h4v-3l6 6-6 6v-4h-4z" fill="url(#metal)" stroke="#555" /></Svg>,
  fontwork: <Svg><path d="M1.500 17L10.500 2.500h3l4.500 15h-4l-1-4H7.500l-2.500 4zM9 10.500h3.500l-1-4.500z" fill="url(#sky)" stroke="#2f5cb4" fillRule="evenodd" /></Svg>,
  group: <Svg><path d="M5.500 5.500h7v7h-7zM9.500 9.500h6v6h-6z" fill="#f4f7fb" stroke="#a4a4a4" /><path d="M2 2h3v3H2zM15 2h3v3h-3zM2 15h3v3H2zM15 15h3v3h-3z" fill="#a4a4a4" /></Svg>,
  star: <Svg><path d="M2 4.500h7m-7 3h5m-6 3h5m-4 3h4m-4 3h4" stroke="#555" /><path d="M11 2l2.300 5.500 6 .5-4.600 4 1.500 6-5.200-3.300L6 18l1.400-6L3 8l5.800-.5z" fill="#ffc84a" stroke="#a8721c" /></Svg>,
  wrench: <Svg><path d="M11 3.500H2.500v12h8l2 2.500" stroke="#a8a8a8" strokeWidth="1.300" /><path d="M12.500 2v4l2 2v5l-2 2v4h2v-2h2v2h2v-4l-2-2V8l2-2V2h-2v3h-2V2z" fill="#f6f8fb" stroke="#a4a4a4" /></Svg>,
  paneLayout: <BoxFrame fill="#fff" stroke="#c33"><path d="M3 4.500h14" stroke="#d33" strokeWidth="2" /><Lines rows={[[4, 7, 6], [4, 9, 5], [4, 11, 6], [4, 13, 5]]} color="#d33" /><path d="M11.500 8.500h5v7h-5z" fill="#fdd" stroke="#d33" /></BoxFrame>,
  paneDesign: <BoxFrame><Lines rows={[[4, 4, 12], [4, 7, 6], [4, 10, 5], [4, 13, 6]]} color="#66749e" /><path d="M4 3l3 1 5 6-3 2-5-5z" fill="#3f6fd0" /><path d="M10 10l2-1.500 6.500 7-2.500 2.500z" fill="#f5b73a" stroke="#9a6a18" /></BoxFrame>,
  paneColor: <BoxFrame><Lines rows={[[4, 4, 12], [4, 7, 4], [4, 10, 4], [4, 13, 4]]} color="#33406e" /><path d="M8.500 7.500h10v11h-10z" fill="url(#rainbow)" stroke="#222" /></BoxFrame>,
  paneAnim: <BoxFrame fill="#f3b9c0"><path d="M12 3h5v14H6z" fill="#93b4e6" /><Lines rows={[[4, 4, 12], [4, 7, 5], [4, 10, 4], [4, 13, 4]]} color="#a06a86" /><path d="M11.500 8.500h6v7h-6z" fill="#4c78cc" /></BoxFrame>,
};

const Tool = ({ name, label, ...rest }) => (
  <ToolButton type="button" aria-label={label || name} {...rest}>{icons[name]}</ToolButton>
);

const Combo = ({ label, value, width, ...rest }) => (
  <ComboBox $width={width} {...rest}>
    <ComboSelect aria-label={label} defaultValue={value}><option>{value}</option></ComboSelect>
    <ComboArrow><Down /></ComboArrow>
  </ComboBox>
);

const MENUS = ['文件(F)', '编辑(E)', '视图(V)', '格式(R)', '插入(I)', '幻灯片(L)', '对象(O)', '播放(S)', '窗口(W)'];

const SLIDES = [
  { name: '幻灯片1', title: '腾牛网', url: 'www.qqtn.com' },
  { name: '幻灯片2', title: '腾牛网', url: 'www.qqtn.com', selected: true },
  { name: '幻灯片3' },
];

const NAV = [
  ['第一张', 'M3 1.500h10M3 2.500h10', 'M8 4l5 5H3z'],
  ['上一张', 'M3 8.500h10M3 9.500h10', 'M8 1l5 5H3z'],
  ['导航', '', ''],
  ['下一张', 'M3 1.500h10M3 2.500h10', 'M8 9.500l5-5H3z'],
  ['最后一张', 'M3 8.500h10M3 9.500h10', 'M8 6.500l5-5H3z'],
];

const range = (n) => Array.from({ length: n }, (_, i) => i + 1);
const tools = (names, width) => names.map((n) => <Tool key={n} name={n} $width={width} />);

const Arrow = ({ d, w = 8, h = 8, color = '#444' }) => <Svg w={w} h={h}><path d={d} fill={color} /></Svg>;
const UP = 'M4 2l4 4H0z';
const DOWN = 'M4 6l4-4H0z';
const LEFT = 'M2 4l4-4v8z';
const RIGHT = 'M6 4L2 0v8z';

export default function App() {
  return (
    <>
      <Global />
      <Defs />
      <Shell>
        <TitleBar>
          <AppLogo />
          <TitleText>SmartPPT - [未命名 1]</TitleText>
          <CaptionButtons>
            <CaptionButton $width={28} aria-label="最小化"><Svg w={13} h={5}><path d="M.5.5h12v4H.5z" fill="#fff" stroke="#4a5566" /></Svg></CaptionButton>
            <CaptionButton $width={27} aria-label="最大化"><Svg w={12} h={10}><path d="M.5.5h11v9H.5z" fill="#fff" stroke="#4a5566" /><path d="M3.500 3.500h5v3h-5z" fill="#9fb3ca" stroke="#4a5566" /></Svg></CaptionButton>
            <CaptionButton $width={47} $danger aria-label="关闭"><Svg w={13} h={10}><path d="M2 1l9 8m0-8L2 9" stroke="#5a3a3a" strokeWidth="4" /><path d="M2 1l9 8m0-8L2 9" stroke="#fff" strokeWidth="2.500" /></Svg></CaptionButton>
          </CaptionButtons>
        </TitleBar>

        <Client>
          <MenuBar>
            <DocLogo />
            {MENUS.map((m) => <MenuItem key={m} type="button">{m}</MenuItem>)}
            <MdiButtons>
              <MdiButton aria-label="最小化文档"><Svg w={10} h={10}><path d="M2 8h6" stroke="#6b7f92" strokeWidth="2" /></Svg></MdiButton>
              <MdiButton aria-label="还原文档"><Svg w={10} h={10}><path d="M3.500 3V1.500h5v4H7M1.500 4.500h5v4h-5zM3 2h6M1 5h6" stroke="#6b7f92" /></Svg></MdiButton>
              <MdiButton aria-label="关闭文档"><Svg w={10} h={10}><path d="M2 2l6 6m0-6L2 8" stroke="#6b7f92" strokeWidth="2" /></Svg></MdiButton>
            </MdiButtons>
          </MenuBar>

          <Toolbar $start={6}>
            {tools(['new', 'open', 'save'], 24)}
            <Separator $lead={2} />
            {tools(['print', 'pdf'], 24)}
            <Separator $lead={2} />
            {tools(['cut', 'copy', 'paste'], 24)}
            <Tool name="undo" $width={32} />
            <DropButton $lead={0} $trail={0} aria-label="撤消列表"><Down /></DropButton>
            <Tool name="redo" $width={28} />
            <DropButton $lead={1} $trail={5} aria-label="恢复列表"><Down color="#aaa" /></DropButton>
            {tools(['actual', 'globe', 'glass'], 24)}
            <Combo label="缩放" value="13%" width={60} $before={6} $after={6} />
            {tools(['charA', 'para', 'number'], 24)}
            <Separator $lead={1} />
            {tools(['brush'], 24)}
            <Separator $lead={2} />
            {tools(['pilcrow'], 24)}
            <Separator $lead={2} />
            {tools(['abc', 'books'], 24)}
            <Separator $lead={2} />
            {tools(['boxT', 'boxP', 'gallery'], 24)}
            <Overflow $lead={8} aria-label="更多"><Chevrons /></Overflow>
          </Toolbar>

          <Toolbar $start={6}>
            <Combo label="字体" value="Arial" width={165} $after={11} />
            <Combo label="字号" value="18" width={52} />
            <ColorPicker aria-label="字体颜色"><ColorSwatch /><ComboArrow><Down /></ComboArrow></ColorPicker>
            {tools(['bold', 'italic', 'underline', 'shadowX', 'outlineX'])}
            <Separator />
            {tools(['grow', 'shrink'])}
            <Separator />
            <Tool name="left" $active />
            {tools(['center', 'right', 'justify'])}
            <Separator />
            {tools(['outdent', 'indent'])}
            <Separator $lead={2} />
            {tools(['bullets', 'numbers'])}
            <Overflow $lead={7} aria-label="更多"><Chevrons /></Overflow>
          </Toolbar>

          <Toolbar $start={5}>
            {tools(['fText', 'fTable', 'fImage'])}
            <Separator $lead={2} />
            {tools(['fOle', 'fSum', 'fT', 'fP', 'fChart'])}
            <Separator $lead={2} />
            {tools(['fFilm', 'fMusic'])}
            <Separator />
            {tools(['line', 'pencil', 'curve', 'arrow', 'con1', 'con2', 'con3', 'rect', 'round', 'circle', 'shapes', 'fontwork'])}
            <Separator />
            {tools(['group'])}
            <Separator $lead={1} />
            {tools(['star', 'wrench'])}
            <Combo label="样式" value="" width={120} $before={8} />
            <Overflow $lead={9} aria-label="更多"><Chevrons /></Overflow>
          </Toolbar>

          <Workspace>
            <SlidePanel>
              <Tabs role="tablist">
                <Tab role="tab" aria-selected="true" $active>幻灯片</Tab>
                <Tab role="tab" aria-selected="false">大纲</Tab>
              </Tabs>
              <PanelBody>
                <Thumbs>
                  {SLIDES.map((s) => (
                    <ThumbItem key={s.name}>
                      <ThumbLabel>{s.name}</ThumbLabel>
                      <ThumbFrame $selected={s.selected} aria-label={s.name}>
                        <ThumbPage $selected={s.selected}>
                          {s.title}
                          {s.url && <ThumbUrl $selected={s.selected}>{s.url}</ThumbUrl>}
                        </ThumbPage>
                      </ThumbFrame>
                    </ThumbItem>
                  ))}
                </Thumbs>
                <ListScroll>
                  <button aria-label="向上"><Arrow d={UP} color="#888" /></button>
                  <button aria-label="向下"><Arrow d={DOWN} color="#888" /></button>
                </ListScroll>
              </PanelBody>
            </SlidePanel>

            <Splitter $width={8}><SplitGrip aria-label="折叠幻灯片面板"><Svg w={3} h={5}><path d="M3 0v5L0 2.500z" fill="#999" /></Svg></SplitGrip></Splitter>

            <Editor>
              <RulerCorner />
              <TopRuler>
                <TopRulerEnd />
                <TopScale>{range(25).map((n) => <li key={n}>{n}</li>)}</TopScale>
                <TopRulerEnd />
              </TopRuler>
              <SideRuler>
                <SideRulerEnd />
                <SideScale>{range(18).map((n) => <li key={n}>{n}</li>)}</SideScale>
                <SideRulerEnd />
              </SideRuler>
              <Canvas>
                <Slide>
                  <Placeholder $width={369} $height={66}><SlideTitle>腾牛网</SlideTitle></Placeholder>
                  <Placeholder $width={305} $height={86}><SlideSubtitle>www.qqtn.com</SlideSubtitle></Placeholder>
                </Slide>
              </Canvas>
              <HScroll>
                <ScrollButton aria-label="向左滚动"><Arrow d={LEFT} /></ScrollButton>
                <ScrollGap $share={150} />
                <ScrollThumb $share={171} aria-label="水平滚动"><Svg w={9} h={7}><path d="M1.500 0v7m3-7v7m3-7v7" stroke="#555" /></Svg></ScrollThumb>
                <ScrollGap $share={150} />
                <ScrollButton aria-label="向右滚动"><Arrow d={RIGHT} /></ScrollButton>
              </HScroll>
              <VScroll>
                <ScrollButton aria-label="向上滚动"><Arrow d={UP} /></ScrollButton>
                <ScrollGap $share={109} />
                <ScrollThumb $share={249} $vertical aria-label="垂直滚动"><Svg w={7} h={9}><path d="M0 1.500h7m-7 3h7m-7 3h7" stroke="#555" /></Svg></ScrollThumb>
                <ScrollGap $share={108} />
                <ScrollButton aria-label="向下滚动"><Arrow d={DOWN} /></ScrollButton>
                {NAV.map(([label, bar, tri]) => (
                  <NavButton key={label} aria-label={label}>
                    <Svg w={16} h={11}>
                      {tri
                        ? <><path d={bar} stroke="#000" /><path d={tri} fill="#000" /></>
                        : <><path d="M6.500 1.500h6v5h-6z" fill="#fff" stroke="#000" /><path d="M4.500 3.500h6v5h-6z" fill="#fff" stroke="#000" /><path d="M2.500 5.500h6v5h-6z" fill="#fff" stroke="#000" /></>}
                    </Svg>
                  </NavButton>
                ))}
              </VScroll>
            </Editor>

            <Splitter $width={9}><SplitGrip aria-label="折叠任务面板"><Svg w={3} h={5}><path d="M0 0v5l3-2.500z" fill="#999" /></Svg></SplitGrip></Splitter>

            <TaskPane>
              <PaneTools>
                <Tool name="paneLayout" />
                <Tool name="paneDesign" $active />
                <Tool name="paneColor" />
                <Tool name="paneAnim" />
                <PaneMore aria-label="面板菜单"><Down /></PaneMore>
              </PaneTools>
              <Rule $top={5} />
              <PaneTitle>幻灯片设计</PaneTitle>
              <StyleList>
                <StyleHeading>当前文档使用的样式</StyleHeading>
                <StyleCard aria-label="Lorem ipsum">
                  <StylePage>
                    <StyleName>Lorem ipsum</StyleName>
                    <StyleLine $indent={1}>• dolor sit amet, consectetuer adipiscing elit,</StyleLine>
                    <StyleLine $indent={4}>• sed diam nonummy nibh euismod tincidunt</StyleLine>
                    <StyleLine $indent={7}>• ut laoreet dolore magna aliquam erat</StyleLine>
                    <StyleLine $indent={10}>• ut wisi enim ad minim veniam</StyleLine>
                    <StyleLine $indent={14}>• quis nostrud exerci</StyleLine>
                    <StyleFooter><span>lorem</span><span>dolor sit amet ipsum</span><span>1</span></StyleFooter>
                  </StylePage>
                </StyleCard>
              </StyleList>
              <LoadLink href="#load">从文件加载...</LoadLink>
              <Rule $top={6} />
              <MasterOption><CheckBox type="checkbox" />不显示幻灯片母板中的</MasterOption>
              <ApplyButton>应用到所有幻灯片</ApplyButton>
            </TaskPane>
          </Workspace>

          <StatusBar>
            <StatusCell />
            <StatusCell $width={100}>第 2 个幻灯片，共</StatusCell>
            <StatusCell $width={113}>幻灯片2</StatusCell>
            <StatusCell $width={40} $center>Ins</StatusCell>
            <ZoomControl>
              <ZoomButton aria-label="缩小"><Svg w={7} h={7}><path d="M0 3.500h7" stroke="#a01010" /></Svg></ZoomButton>
              <ZoomSlider type="range" aria-label="缩放比例" min="0" max="100" defaultValue="6" />
              <ZoomButton aria-label="放大"><Svg w={7} h={7}><path d="M0 3.500h7M3.500 0v7" stroke="#a01010" /></Svg></ZoomButton>
            </ZoomControl>
            <ZoomValue>13%</ZoomValue>
          </StatusBar>
        </Client>
      </Shell>
    </>
  );
}
